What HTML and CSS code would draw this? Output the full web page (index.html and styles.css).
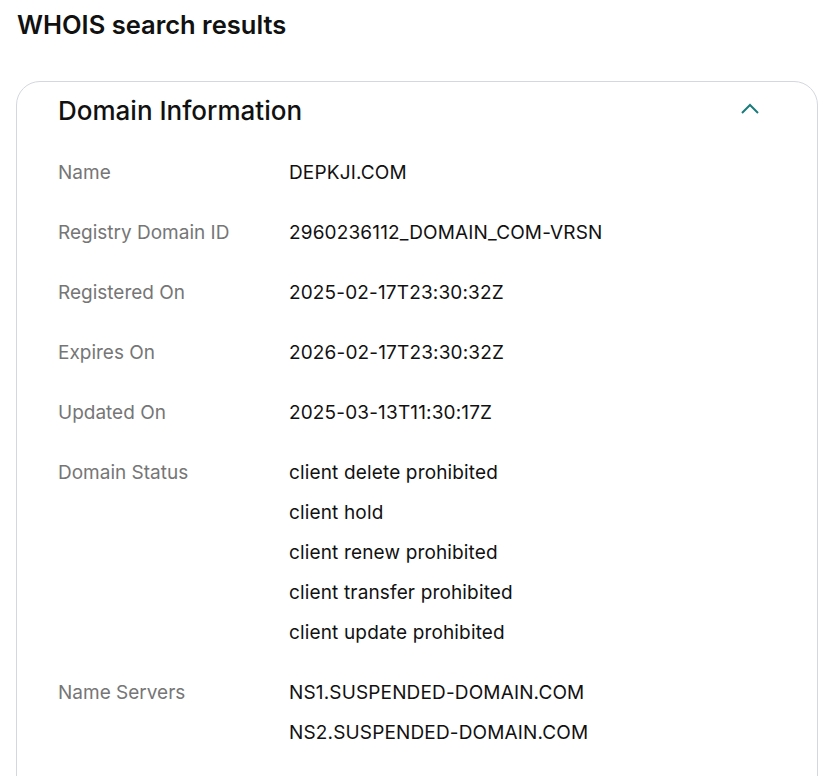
FILE: index.html
```html
<!DOCTYPE html>
<html lang="en">
<head>
    <meta charset="UTF-8">
    <meta name="viewport" content="width=device-width, initial-scale=1.0">
    <title>WHOIS search results</title>
    <link rel="stylesheet" href="styles.css">
</head>
<body>
    <h2 class="page-title">WHOIS search results</h2>

    <div class="card">
        <div class="card-header">
            <h3>Domain Information</h3>
            <svg class="chevron" width="20" height="12" viewBox="0 0 20 12">
                <path d="M2 10 L10 2 L18 10" fill="none" stroke="#1b7b7b" stroke-width="2"/>
            </svg>
        </div>

        <div class="row">
            <div class="label">Name</div>
            <div class="value"><div>DEPKJI.COM</div></div>
        </div>
        <div class="row">
            <div class="label">Registry Domain ID</div>
            <div class="value"><div>2960236112_DOMAIN_COM-VRSN</div></div>
        </div>
        <div class="row">
            <div class="label">Registered On</div>
            <div class="value"><div>2025-02-17T23:30:32Z</div></div>
        </div>
        <div class="row">
            <div class="label">Expires On</div>
            <div class="value"><div>2026-02-17T23:30:32Z</div></div>
        </div>
        <div class="row">
            <div class="label">Updated On</div>
            <div class="value"><div>2025-03-13T11:30:17Z</div></div>
        </div>
        <div class="row">
            <div class="label">Domain Status</div>
            <div class="value">
                <div>client delete prohibited</div>
                <div>client hold</div>
                <div>client renew prohibited</div>
                <div>client transfer prohibited</div>
                <div>client update prohibited</div>
            </div>
        </div>
        <div class="row">
            <div class="label">Name Servers</div>
            <div class="value">
                <div>NS1.SUSPENDED-DOMAIN.COM</div>
                <div>NS2.SUSPENDED-DOMAIN.COM</div>
            </div>
        </div>
    </div>
</body>
</html>
```

FILE: styles.css
```css
body {
    font-family: Inter, "Noto Sans", Arial, sans-serif;
    margin: 0;
    padding: 0 13px 0 16px;
    color: #111;
    background-color: #fff;
}
.page-title {
    font-size: 25.5px;
    font-weight: 600;
    line-height: 30px;
    margin: 10px 0 41px 1px;
}
.card {
    border: 1px solid #d4d7dd;
    border-radius: 24px;
    padding: 14px 57px 40px 41px;
}
.card-header {
    display: flex;
    justify-content: space-between;
    align-items: center;
    margin-bottom: 27px;
}
.card-header h3 {
    font-size: 26px;
    font-weight: 500;
    line-height: 30px;
    margin: 0;
}
.chevron {
    display: block;
    margin-top: -4px;
}
.row {
    display: flex;
    font-size: 19px;
    line-height: 40px;
    margin-bottom: 20px;
}
.label {
    width: 231px;
    color: #767676;
}
.value {
    color: #111;
    letter-spacing: 0.15px;
}
```
